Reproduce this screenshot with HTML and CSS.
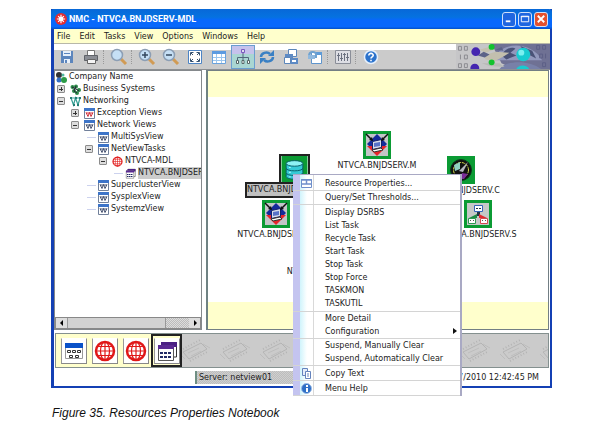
FILE: index.html
```html
<!DOCTYPE html>
<html lang="en">
<head>
<meta charset="utf-8">
<title>NMC - NTVCA.BNJDSERV-MDL</title>
<link rel="stylesheet" href="styles.css">
</head>
<body>
<svg class="defs" aria-hidden="true">
  <symbol id="i-view" viewBox="0 0 11 11"><path fill="#fff" stroke="#71809a" d="M.5.5h10v10H.5z"/><path fill="#3d74c8" d="M0 0h11v3H0z"/><path fill="none" stroke="#44506e" d="M2 4.500l2 4 1.500-4 1.500 4 2-4M2 5h7"/></symbol>
  <symbol id="i-exc" viewBox="0 0 11 11"><path fill="#fff" stroke="#71809a" d="M.5.5h10v10H.5z"/><path fill="#3d74c8" d="M0 0h11v3H0z"/><path fill="none" stroke="#d0303c" d="M2 4.500l2 4 1.500-4 1.500 4 2-4M2 5h7"/></symbol>
  <symbol id="i-globe" viewBox="0 0 22 22"><circle cx="11" cy="11" r="9" fill="#fff" stroke="#e01818" stroke-width="2.500"/><path fill="none" stroke="#e01818" stroke-width="1.200" d="M11 2v18M2 11h18M4 6.500h14M4 15.500h14"/><ellipse cx="11" cy="11" rx="4.500" ry="9" fill="none" stroke="#e01818" stroke-width="1.200"/></symbol>
  <symbol id="i-cards" viewBox="0 0 22 22"><path fill="#fff" stroke="#333" d="M6 2.500h14.500V17H6z"/><path fill="#4b2183" d="M5 2h16v5H5z"/><path fill="#fff" stroke="#555" d="M2.500 5.500h15v15h-15z"/><path fill="#5a2a92" d="M2 5h16v4H2z"/><path fill="none" stroke="#222a66" stroke-width="2" stroke-dasharray="3 1" d="M4 13h12M4 17h12"/></symbol>
  <symbol id="i-task" viewBox="0 0 28 28"><path fill="#0b9b34" d="M0 0h28v28H0z"/><path fill="#c3c5c8" d="M3 3h22v22H3z"/><path fill="#142b9a" d="M14 3l10 10-3 3H7l-3-3z"/><path fill="#e8252b" d="M4 15h20l-10 10z"/><path fill="#d9ddea" stroke="#14206c" d="M9.500 10.500l9-2v8l-9 2z"/><path fill="#5872c8" d="M11 12l6-1v4l-6 1z"/><path fill="#fff" stroke="#333" d="M9 19l9-2 2 2-9 2z"/><path stroke="#111" stroke-width="1.500" d="M3 3l6 6M25 3l-6 6"/><path fill="#111" d="M10 10l-4-1 3-3zM18 10l4-1-3-3z"/></symbol>
  <symbol id="i-mag" viewBox="0 0 18 18"><path stroke="#d19b54" stroke-width="3" d="M11 11l5 5"/><circle cx="7" cy="7" r="5.500" fill="#c5dff5" stroke="#8c9eb4" stroke-width="1.500"/></symbol>
</svg>

<main class="window">
  <header class="titlebar">
    <svg class="logo" viewBox="0 0 13 13"><circle cx="6.500" cy="6.500" r="6.500" fill="#e22d31"/><path stroke="#fff" stroke-width="1.300" d="M6.500 2v9M2 6.500h9M3.400 3.400l6.200 6.200M9.600 3.400L3.400 9.600"/><circle cx="6.500" cy="6.500" r="2.500" fill="#fff"/></svg>
    <h1>NMC - NTVCA.BNJDSERV-MDL</h1>
    <button class="winbtn" aria-label="Minimize"><svg viewBox="0 0 13 13"><path fill="#fff" d="M3 8h5v2H3z"/></svg></button>
    <button class="winbtn" aria-label="Maximize"><svg viewBox="0 0 13 13"><path fill="none" stroke="#fff" d="M2.500 3.500h8v6h-8zM2 4h9"/></svg></button>
    <button class="winbtn close" aria-label="Close"><svg viewBox="0 0 13 13"><path stroke="#fff" stroke-width="2" d="M3 3l7 7M10 3l-7 7"/></svg></button>
  </header>

  <nav class="menubar">
    <button>File</button><button>Edit</button><button>Tasks</button><button>View</button><button>Options</button><button>Windows</button><button>Help</button>
  </nav>

  <div class="toolbar">
    <div class="tools">
      <button aria-label="Save"><svg viewBox="0 0 18 18"><path fill="#5d86bd" d="M3 3h12v12H3z"/><path fill="#e8f0fa" d="M5 3h8v5H5zM6 11h6v4H6z"/><path fill="#5d86bd" d="M6 5h6v1H6zM7 12h2v3H7z"/></svg></button>
      <button aria-label="Print"><svg viewBox="0 0 18 18"><path fill="#fff" stroke="#777" d="M5.500 2.500h7v5h-7z"/><path fill="#8a8d94" stroke="#5f6268" d="M2.500 7.500h13v5h-13z"/><path fill="#f4f4f4" stroke="#666" d="M5.500 11.500h8v4h-8z"/></svg></button>
      <span class="sep"></span>
      <button aria-label="Find"><svg viewBox="0 0 18 18"><use href="#i-mag"/></svg></button>
      <span class="sep"></span>
      <button aria-label="Zoom in"><svg viewBox="0 0 18 18"><use href="#i-mag"/><path stroke="#34485e" stroke-width="1.500" d="M4 7h6M7 4v6"/></svg></button>
      <button aria-label="Zoom out"><svg viewBox="0 0 18 18"><use href="#i-mag"/><path stroke="#34485e" stroke-width="1.500" d="M4 7h6"/></svg></button>
      <button aria-label="Fit"><svg viewBox="0 0 18 18"><path fill="#fff" stroke="#4d84c4" d="M2.500 2.500h13v13h-13z"/><path fill="none" stroke="#35506e" d="M4.500 7.500v-3h3M10.500 4.500h3v3M13.500 10.500v3h-3M7.500 13.500h-3v-3M5 5l2 2M13 5l-2 2M13 13l-2-2M5 13l2-2"/></svg></button>
      <button aria-label="Details"><svg viewBox="0 0 18 18"><path fill="#fff" stroke="#6aa2dc" d="M2.500 3.500h13v12h-13z"/><path fill="#5d9be0" d="M2 3h14v3H2z"/><path stroke="#9cc6ee" d="M6.500 6v9M11.500 6v9M3 9.500h12M3 12.500h12"/></svg></button>
      <button class="on" aria-label="Tree"><svg viewBox="0 0 18 18"><path fill="none" stroke="#52687c" d="M9 5v8M3.500 13V9.500h11V13"/><path fill="#dde" stroke="#7a5ac0" d="M7.500 1.500h3v3h-3z"/><path fill="#fff" stroke="#566" d="M2.500 12.500h2v3h-2zM8 12.500h2v3H8zM13.500 12.500h2v3h-2z"/></svg></button>
      <button aria-label="Refresh"><svg viewBox="0 0 18 18"><path fill="none" stroke="#3a80c4" stroke-width="2.500" d="M3 9c0-4 6-6 9-3M15 9c0 4-6 6-9 3"/><path fill="#3a80c4" d="M10 8l6 0 0-6zM8 10H2v6z"/></svg></button>
      <button aria-label="Save view"><svg viewBox="0 0 18 18"><path fill="#fff" stroke="#5b86ba" d="M6.500 1.500h8v7h-8z"/><path fill="#5d8ac4" d="M3 6h8v5H3zM8 10h8v6H8z"/><path fill="#fff" stroke="#5b86ba" d="M2.500 9.500h6v6h-6z"/><path fill="#fff" d="M10 12h4v2h-4z"/></svg></button>
      <button aria-label="Restore view"><svg viewBox="0 0 18 18"><path fill="#fff" stroke="#5f95cc" d="M5.500 4.500h10v11h-10z"/><path fill="#5d9bd8" d="M9 4h7v3H9z"/><path fill="none" stroke="#6fa2d0" stroke-width="2" d="M3 8c0-5 6-5 7-2v4"/><path fill="#8fb8de" d="M2 7h7v4H2z"/></svg></button>
      <span class="sep"></span>
      <button aria-label="Settings"><svg viewBox="0 0 18 18"><path fill="#dddee4" stroke="#8a8e98" d="M1.500 2.500h15v13h-15z"/><path stroke="#6b7180" d="M4.500 5v8M7.500 5v8M10.500 5v8M13.500 5v8M3 7.500h3M6 10.500h3M9 6.500h3M12 9.500h3"/></svg></button>
      <span class="sep"></span>
      <button aria-label="Help"><svg viewBox="0 0 18 18"><circle cx="9" cy="9" r="6.500" fill="#2c73cc" stroke="#e6f0fc" stroke-width="1.500"/><path fill="none" stroke="#fff" stroke-width="1.600" d="M6.800 7.500c0-3 4.600-2.600 4.400 0C11 9 9 8.700 9 10.600M9 11.700v1.500"/></svg></button>
    </div>
    <svg class="banner" viewBox="0 0 95 26" preserveAspectRatio="none">
      <path fill="#c6c6c8" d="M0 0h95v26H0z"/><path fill="#6f7194" d="M36 0h59v26H58L46 20z"/>
      <path fill="#9298bc" d="M38 17C43-3 76-4 87 17z"/><path fill="#4a5277" d="M46 12c4-9 12-9 14-7l-5 4 6 3-10 4zM65 2l12 5 4 8-11-6z"/><path fill="#c3bfae" d="M28 12l12-4 14 1-6 4-9 5-9-2zM24 6l9-3 5 3-8 3z"/>
      <path fill="#5c6288" d="M22 12l6-4 6 3-5 3zM40 6l6-3 2 4z"/>
      <path fill="#7880a8" d="M44 26c6-9 30-10 42 0z"/><path fill="#b7b9b6" d="M26 20l18 0 5 4-15-1z"/>
      <g fill="none" stroke="#8b8b90"><path d="M2.500 2.500h3v4h-3zM8.500 2.500h3v4h-3zM4.500 11v5M8.500 11.500h3v4h-3zM2.500 20.500h3v4h-3zM8.500 20.500h3v4h-3z"/></g>
      <g fill="none" stroke="#5d6087"><path d="M81.500 1.500h3v4h-3zM87.500 1.500h3v4h-3zM84.500 10.500h3v4h-3zM90.500 10v5M87.500 19.500h3v4h-3z"/></g>
      <circle cx="20" cy="8" r="4.500" fill="#4526b0"/><circle cx="19" cy="25" r="4.500" fill="#4526b0"/><circle cx="36" cy="3" r="3" fill="#12c22e"/><circle cx="36" cy="19" r="3" fill="#12c22e"/>
      <circle cx="68" cy="11" r="7" fill="#18cbd0"/><circle cx="66" cy="9" r="3" fill="#7af0f0"/><path fill="#18cbd0" d="M61 26c2-5 11-5 13 0z"/>
    </svg>
  </div>

  <div class="work">
    <section class="side">
      <ul class="tree">
        <li class="root"><svg class="ic" viewBox="0 0 11 11"><circle cx="3" cy="3" r="3" fill="#333"/><circle cx="3" cy="8" r="2.500" fill="#356fc4"/><circle cx="8" cy="8" r="3" fill="#2c9b47"/><circle cx="7" cy="3" r="1.500" fill="#4fb7a0"/></svg>Company Name</li>
        <li><button class="exp plus" aria-label="Expand"></button><svg class="ic" viewBox="0 0 11 11"><g fill="#2c8a48"><circle cx="2.500" cy="3" r="2"/><circle cx="6" cy="2.500" r="2"/><circle cx="9" cy="6" r="2"/><circle cx="7" cy="9" r="2"/><circle cx="4" cy="7" r="2"/></g><path fill="none" stroke="#223" d="M2 3l4 2 3 2M6 2L4 7l3 2"/></svg>Business Systems</li>
        <li><button class="exp" aria-label="Collapse"></button><svg class="ic" viewBox="0 0 11 11"><path fill="none" stroke="#35a095" stroke-width="1.200" d="M1 2l2.500 7L5.500 2 8 9l2-7M1 2h9"/><g fill="#237d74"><path d="M0 1h2v2H0zM5 1h2v2H5zM9 1h2v2H9zM3 8h2v2H3zM7 8h2v2H7z"/></g></svg>Networking</li>
        <li class="l1"><button class="exp plus" aria-label="Expand"></button><svg class="ic"><use href="#i-exc"/></svg>Exception Views</li>
        <li class="l1"><button class="exp" aria-label="Collapse"></button><svg class="ic"><use href="#i-view"/></svg>Network Views</li>
        <li class="l2"><span class="twig"></span><svg class="ic"><use href="#i-view"/></svg>MultiSysView</li>
        <li class="l2"><button class="exp" aria-label="Collapse"></button><svg class="ic"><use href="#i-view"/></svg>NetViewTasks</li>
        <li class="l3"><button class="exp" aria-label="Collapse"></button><svg class="ic"><use href="#i-globe"/></svg>NTVCA-MDL</li>
        <li class="l4"><span class="twig"></span><svg class="ic"><use href="#i-cards"/></svg><span class="sel">NTVCA.BNJDSERV</span></li>
        <li class="l2"><span class="twig"></span><svg class="ic"><use href="#i-view"/></svg>SuperclusterView</li>
        <li class="l2"><span class="twig"></span><svg class="ic"><use href="#i-view"/></svg>SysplexView</li>
        <li class="l2"><span class="twig"></span><svg class="ic"><use href="#i-view"/></svg>SystemzView</li>
      </ul>
      <div class="scroll"><button aria-label="Scroll left"><svg viewBox="0 0 10 10"><path d="M6 2v6L3 5z"/></svg></button><span class="thumb"></span><span class="track"></span><button aria-label="Scroll right"><svg viewBox="0 0 10 10"><path d="M4 2v6l3-3z"/></svg></button></div>
    </section>

    <section class="canvas">
      <div class="node n-m"><svg><use href="#i-task"/></svg><span>NTVCA.BNJDSERV.M</span></div>
      <div class="node n-c"><svg viewBox="0 0 28 28"><path fill="#0b9b34" d="M0 0h28v28H0z"/><circle cx="14" cy="14" r="10.500" fill="#111" stroke="#0c3a1c"/><circle cx="14" cy="14" r="7.500" fill="none" stroke="#d7dc4c" stroke-width="1" stroke-dasharray="3 1"/><path fill="#7a2c98" d="M15 17l6 1-4 5-4 0z"/><path fill="#8fd0c0" d="M7 9l6-3 0 7-5 2z"/><path fill="#b6b9c0" d="M12 15l9-9-5 10z"/></svg><span>NTVCA.BNJDSERV.C</span></div>
      <div class="node n-a"><svg><use href="#i-task"/></svg><span>NTVCA.BNJDSERV.A</span></div>
      <div class="node n-s"><svg viewBox="0 0 28 28"><path fill="#0b9b34" d="M0 0h28v28H0z"/><path fill="#c6c8c8" d="M3 3h22v22H3z"/><path fill="#fff" stroke="#3563b8" d="M10.500 5.500h8v6h-8z"/><path fill="#234" d="M12 8h2v1h-2zM15 8h2v1h-2zM13 12h3v4h-3z"/><path fill="#1c8a45" d="M13 14l-8 4h8z"/><path fill="#e02a30" d="M15 14l8 4h-8z"/><path fill="#fff" stroke="#2c9a50" d="M4.500 18.500h7v5h-7z"/><path fill="#fff" stroke="#d24a50" d="M16.500 18.500h7v5h-7z"/><path fill="#555" d="M6 20h1v1H6zM9 20h1v1H9zM18 20h1v1h-1zM21 20h1v1h-1z"/></svg><span>NTVCA.BNJDSERV.S</span></div>
      <div class="node n-b1"><span>NTVCA.BNJDSERV</span></div>
      <div class="node n-b2"><span>NTVCA.BNJDSERV.I</span></div>
      <div class="node picked n-d"><svg viewBox="0 0 28 28"><path fill="#0b9b34" d="M0 0h28v28H0z"/><g fill="#35c9d6" stroke="#075a66"><path d="M5 19v3c0 4 18 4 18 0v-3z"/><path d="M5 14v4c0 4 18 4 18 0v-4z"/><path d="M5 9v4c0 4 18 4 18 0V9z"/><ellipse cx="14" cy="8" rx="9" ry="3" fill="#8df2f4"/></g><path stroke="#c8ffff" stroke-width="2" d="M9 12v1M9 17v1M9 22v1"/></svg><span>NTVCA.BNJDSERV.D</span></div>
    </section>
  </div>

  <div class="taskstrip">
    <div class="opened">
      <button aria-label="Company view"><span><svg viewBox="0 0 22 22"><path fill="#fff" stroke="#999" d="M2.500 4.500h17v14h-17z"/><path fill="#0a52c8" d="M2 3h18v5H2z"/><path fill="#fff" stroke="#333" d="M4.500 10.500h3v2h-3zM9.500 10.500h3v2h-3zM14.500 10.500h3v2h-3zM6.500 15.500h3v2h-3zM12.500 15.500h3v2h-3z"/></svg></span></button>
      <button aria-label="Network view"><span><svg><use href="#i-globe"/></svg></span></button>
      <button aria-label="NTVCA-MDL"><span><svg><use href="#i-globe"/></svg></span></button>
      <button class="current" aria-label="NTVCA.BNJDSERV-MDL"><span><svg><use href="#i-cards"/></svg></span></button>
    </div>
    <svg class="chips"><defs><pattern id="chip" x="-3" y="2" width="40" height="32" patternUnits="userSpaceOnUse"><g fill="none" stroke="#b4b4b4" stroke-width="1"><path d="M4 16l18-9 6 6-18 10z"/><path stroke-dasharray="1 2" stroke-width="2" d="M4 13l17-9M11 25l17-9"/><path stroke="#bdbdbd" d="M9 17l11-5M12 20l10-5M1 18l5 5M24 8l7 4"/></g></pattern></defs><rect width="100%" height="100%" fill="url(#chip)"/></svg>
  </div>

  <footer class="status"><span class="server">Server: netview01</span><span class="date">12/17/2010 12:42:45 PM</span></footer>

  <div class="context" role="menu">
    <div class="group first"><button role="menuitem"><svg viewBox="0 0 11 11"><path fill="#fff" stroke="#6f8fcb" d="M.5 1.500h10v8H.5z"/><path stroke="#6f8fcb" stroke-width="1.500" d="M0 2h11M5.500 2v4M1 6h9"/></svg>Resource Properties...</button></div>
    <div class="group"><button role="menuitem">Query/Set Thresholds...</button></div>
    <div class="group roomy">
      <button role="menuitem">Display DSRBS</button><button role="menuitem">List Task</button><button role="menuitem">Recycle Task</button><button role="menuitem">Start Task</button><button role="menuitem">Stop Task</button><button role="menuitem">Stop Force</button><button role="menuitem">TASKMON</button><button role="menuitem">TASKUTIL</button>
    </div>
    <div class="group"><button role="menuitem">More Detail</button><button role="menuitem" class="more" aria-haspopup="true">Configuration</button></div>
    <div class="group"><button role="menuitem">Suspend, Manually Clear</button><button role="menuitem">Suspend, Automatically Clear</button></div>
    <div class="group padded"><button role="menuitem"><svg viewBox="0 0 11 11"><path fill="#e4ecfa" stroke="#6483bd" d="M1.500.5h5v7h-5z"/><path fill="#fff" stroke="#6483bd" d="M4.500 3.500h5v7h-5zM6 6h2M6 8h2"/></svg>Copy Text</button></div>
    <div class="group padded"><button role="menuitem"><svg viewBox="0 0 11 11"><circle cx="5.500" cy="5.500" r="5" fill="#2f6fc6" stroke="#9dbce6"/><path fill="#fff" d="M5 2h2v2H5zM5 5h2v4H5z"/></svg>Menu Help</button></div>
  </div>
</main>
<p class="caption">Figure 35. Resources Properties Notebook</p>
</body>
</html>
```
FILE: styles.css
```css
* { box-sizing: border-box; }
body {
  margin: 0;
  padding: 9px 49px 0 51px;
  background: #fff;
  color: #222;
  font: 8px/12px "DejaVu Sans", sans-serif;
}
button { margin: 0; padding: 0; border: 0; background: none; color: inherit; font: inherit; }
svg { display: block; flex: none; }
ul { margin: 0; padding: 0; list-style: none; }
.defs { position: absolute; width: 0; height: 0; }

.window {
  position: relative;
  border: solid #1440b4;
  border-width: 0 2px 2px 3px;
  background: #fff;
}
.titlebar {
  display: flex;
  align-items: center;
  gap: 2px;
  height: 20px;
  margin: 0 -2px 0 -3px;
  padding: 0 4px;
  border-radius: 3px 3px 0 0;
  background: linear-gradient(#0868d8, #0572e0 40%, #0868fc 55%, #0868fc 88%, #0450c8);
}
.logo { width: 12px; height: 12px; }
.titlebar h1 {
  flex: 1;
  margin: 0;
  color: #fff;
  font: bold 9px/12px Roboto, sans-serif;
}
.winbtn {
  width: 14px;
  height: 15px;
  border: 1px solid #cfe0fa;
  border-radius: 3px;
  background: #1f66e0;
}
.winbtn svg { width: 12px; height: 12px; }
.winbtn.close { background: #e4502e; }

.menubar {
  display: flex;
  gap: 9px;
  height: 15px;
  padding: 1px 3px 0;
  border-bottom: 1px solid #b8b8a8;
  background: #ffffcc;
}

.toolbar {
  display: flex;
  height: 26px;
  border-bottom: 1px solid #8c8f92;
  background: linear-gradient(#fff 6px, #cbcbcb 6px);
}
.tools { display: flex; flex: 1; align-items: center; padding-left: 1px; }
.tools button { display: grid; place-items: center; width: 24px; height: 24px; }
.tools svg { width: 18px; height: 18px; }
.tools .on { border: 1px solid #6a9ed0; background: linear-gradient(#c6c2ec 8px, #a9d6d2 8px); }
.sep { width: 4px; height: 14px; border-left: 1px dotted #999; }
.banner { width: 94px; height: 25px; }

.work { display: flex; height: 260px; padding-right: 1px; }
.side {
  display: flex;
  flex-direction: column;
  width: 148px;
  border: 1px solid #85898c;
  overflow: hidden;
}
.tree { flex: 1; white-space: nowrap; }
.tree li { display: flex; align-items: center; height: 12px; padding-left: 2px; }
.tree .root { padding-left: 1px; }
.tree .l1 { padding-left: 16px; }
.tree .l2 { padding-left: 30px; }
.tree .l3 { padding-left: 44px; }
.tree .l4 { padding-left: 57px; }
.ic { width: 11px; height: 11px; margin-right: 2px; }
.exp {
  flex: none;
  width: 8px;
  height: 8px;
  margin-right: 5px;
  border: 1px solid #8c8c8c;
  border-radius: 1px;
  background: linear-gradient(#333, #333) center / 4px 1px no-repeat #ddd;
}
.exp.plus {
  background:
    linear-gradient(#333, #333) center / 4px 1px no-repeat,
    linear-gradient(#333, #333) center / 1px 4px no-repeat #ddd;
}
.twig { flex: none; width: 9px; margin: 0 2px; border-top: 1px solid #ccd2ee; }
.sel { background: #ccc; }

.scroll { display: flex; height: 12px; border: 1px solid #888; background: #ccc; }
.scroll button { display: grid; place-items: center; width: 11px; background: #ddd; }
.scroll svg { width: 10px; height: 10px; }
.thumb { flex: 1; border: solid #999; border-width: 0 1px; background: #d2d2d2; }
.track { width: 23px; background: repeating-conic-gradient(#bbb 0 25%, #ddd 0 50%) 0 0 / 2px 2px; }

.canvas {
  position: relative;
  flex: 1;
  margin-left: 4px;
  border: 1px solid #737f84;
  border-left: 2px solid #6f8283;
  overflow: hidden;
  background: linear-gradient(#ffffcc 26px, #fff 26px, #fff 231px, #ffffcc 231px);
}
.node {
  position: absolute;
  display: flex;
  flex-direction: column;
  align-items: center;
  width: 84px;
  white-space: nowrap;
}
.node svg { width: 28px; height: 28px; }
.node span { line-height: 13px; }
.n-m { left: 127px; top: 60px; }
.n-c { left: 211px; top: 85px; }
.n-a { left: 26px; top: 129px; }
.n-s { left: 228px; top: 129px; }
.n-b1 { left: 72px; top: 194px; }
.n-b2 { left: 175px; top: 194px; }
.n-d { left: 37px; top: 83px; width: 98px; }
.picked svg { width: 31px; height: 30px; border: 2px solid #222; }
.picked span {
  width: 98px;
  margin-top: -2px;
  border: 2px solid #222;
  background: #c0c0c0;
  line-height: 12px;
}

.taskstrip {
  display: flex;
  height: 35px;
  margin: 3px 1px 0;
  border: 1px solid #84908f;
  background: #cbcbcb;
}
.opened { display: flex; padding-left: 2px; background: #ffffcc; }
.opened button { display: grid; place-items: center; width: 31px; border: 2px solid transparent; }
.opened .current { border-color: #222; }
.opened span { padding: 1px; border: 1px solid; border-color: #fff #888 #888 #999; background: #fff; }
.opened svg { width: 22px; height: 22px; }
.chips { flex: 1; width: 0; height: 33px; }

.status {
  display: flex;
  justify-content: space-between;
  height: 18px;
  padding: 3px 11px 2px 141px;
  line-height: 14px;
}
.server {
  width: 120px;
  padding-left: 2px;
  border-left: 2px solid #6f8f83;
  background: repeating-conic-gradient(#bdbdbd 0 25%, #cfcfcf 0 50%) 0 0 / 2px 2px;
}

.context {
  position: absolute;
  left: 239px;
  top: 165px;
  width: 169px;
  border: solid #a9a9c4;
  border-width: 1px 2px 0 0;
  background: linear-gradient(90deg, #c4c4f0 7px, #d0f4fc 7px, #fff 14px, #fff 20px, #d9d9d9 20px, #d9d9d9 21px, #fff 21px);
}
.group { padding-left: 7px; border-bottom: 1px solid #d4d4d4; }
.group button {
  position: relative;
  display: block;
  width: 100%;
  height: 13px;
  padding-left: 25px;
  line-height: 13px;
  text-align: left;
}
.group svg { position: absolute; left: 1px; top: 1px; width: 11px; height: 11px; }
.group.first { padding-top: 2px; }
.group.roomy { padding-top: 1px; padding-bottom: 1px; }
.group.padded { padding-top: 1px; }
.more::after {
  content: "";
  position: absolute;
  right: 3px;
  top: 3px;
  border: solid transparent;
  border-width: 3px 0 3px 4px;
  border-left-color: #111;
}

.caption {
  margin: 17px 1px 0;
  color: #111;
  font: italic 12px/16px "Liberation Sans", Arial, sans-serif;
}
```
